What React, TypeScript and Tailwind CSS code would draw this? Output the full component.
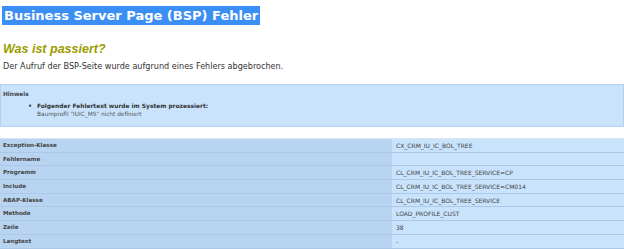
export default function App() {
  const rows = [
    { label: 'Exception-Klasse', value: 'CX_CRM_IU_IC_BOL_TREE' },
    { label: 'Fehlername', value: '' },
    { label: 'Programm', value: 'CL_CRM_IU_IC_BOL_TREE_SERVICE=CP' },
    { label: 'Include', value: 'CL_CRM_IU_IC_BOL_TREE_SERVICE=CM014' },
    { label: 'ABAP-Klasse', value: 'CL_CRM_IU_IC_BOL_TREE_SERVICE' },
    { label: 'Methode', value: 'LOAD_PROFILE_CUST' },
    { label: 'Zeile', value: '38' },
    { label: 'Langtext', value: '-' },
  ];

  return (
    <div className="w-[624px] h-[249px] overflow-hidden bg-white text-[#333] font-['DejaVu_Sans',sans-serif]">
      <div className="pt-[3px] pl-[2px]">
        <h1 className="inline-block h-[19px] bg-[#3b8ef4] px-[2px] text-[13px] font-bold leading-[19px] text-white">
          Business Server Page (BSP) Fehler
        </h1>
      </div>

      <h2 className="mt-[15px] pl-[3px] font-['Liberation_Sans',sans-serif] text-[12.5px] font-bold italic leading-[15px] text-[#9c9c00]">
        Was ist passiert?
      </h2>
      <p className="mt-[4px] pl-[3px] text-[8.1px] leading-[10px] text-[#333]">
        Der Aufruf der BSP-Seite wurde aufgrund eines Fehlers abgebrochen.
      </p>

      <div className="mt-[13px] h-[43px] border border-[#b4d0ef] bg-[#c9e3fd] px-[2px] pt-[5px]">
        <div className="text-[5.8px] font-bold leading-[8px] text-[#444]">Hinweis</div>
        <div className="mt-[4px] flex pl-[25px]">
          <span className="w-[9px] text-[6.5px] font-bold leading-[8px] text-[#444]">•</span>
          <div>
            <div className="text-[5.9px] font-bold leading-[8px] text-[#333]">
              Folgender Fehlertext wurde im System prozessiert:
            </div>
            <div className="text-[5.8px] leading-[8px] text-[#555]">
              Baumprofil "IUIC_MS" nicht definiert
            </div>
          </div>
        </div>
      </div>

      <div className="mt-[11px] border-t border-[#d6e6f7]">
        {rows.map((row) => (
          <div key={row.label} className="flex h-[13.7px] border-b border-[#abc8e8]">
            <div className="w-[392px] bg-[#b9d4f0] pl-[3px] text-[5.6px] font-bold leading-[13px] text-[#444]">
              {row.label}
            </div>
            <div className="flex-1 bg-[#c9e3fd] pl-[4px] text-[6px] leading-[13px] text-[#444]">
              {row.value}
            </div>
          </div>
        ))}
      </div>
    </div>
  );
}
